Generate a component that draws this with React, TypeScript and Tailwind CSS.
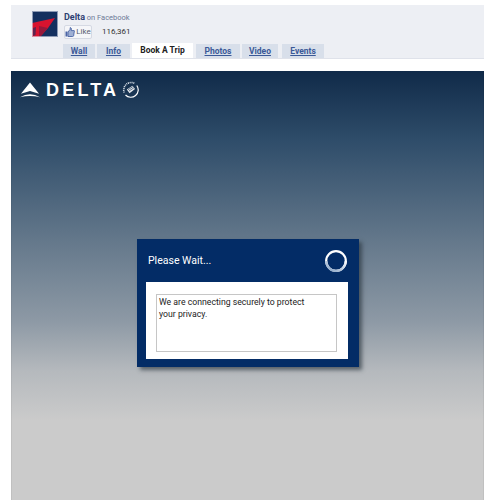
const tabs = [
  { label: "Wall", cls: "w-[32px] mr-[2px]" },
  { label: "Info", cls: "w-[33px] mr-[2px]" },
  { label: "Book A Trip", cls: "w-[61px] mr-[3px]", active: true },
  { label: "Photos", cls: "w-[44px] mr-[2px]" },
  { label: "Video", cls: "w-[36px] mr-[4px]" },
  { label: "Events", cls: "w-[42px]" },
];

function DeltaWidget() {
  return (
    <svg width="26" height="26" viewBox="0 0 26 26" className="shrink-0">
      <rect width="26" height="26" fill="#14305f" />
      <polygon points="0,12 23,7 16,17 8,26 0,26" fill="#d8132f" />
      <polygon points="7,15 16,17 8,26 7,26" fill="#96183a" />
      <polygon points="1,17 4,16 3.5,24 1,25" fill="#5d2550" />
      <rect x="0.5" y="0.5" width="25" height="25" fill="none" stroke="#dfe3ee" strokeWidth="1" opacity="0.6" />
    </svg>
  );
}

function Seal() {
  return (
    <svg width="17" height="17" viewBox="0 0 17 17" className="shrink-0">
      <path d="M14.8 4.5 A7.4 7.4 0 0 1 3.5 14" fill="none" stroke="#fff" strokeWidth="1.2" />
      <path d="M2.2 11.5 A7.4 7.4 0 0 1 13 2.6" fill="none" stroke="#dfe6ee" strokeWidth="1.6" strokeDasharray="1 0.8" />
      <path d="M4.8 8.5 L10.5 4.8 L13 8 L7.5 12.2 Z" fill="#fff" opacity="0.9" />
      <path d="M6 8.7 L10.8 5.7 M7 10 L11.8 6.9" stroke="#233d5c" strokeWidth="0.7" />
    </svg>
  );
}

function Spinner() {
  return (
    <svg width="24" height="24" viewBox="0 0 24 24">
      <defs>
        <linearGradient id="spin" x1="1" y1="0" x2="0" y2="1">
          <stop offset="0" stopColor="#ffffff" />
          <stop offset="1" stopColor="#7f9dc2" />
        </linearGradient>
      </defs>
      <circle cx="12" cy="12" r="9.8" fill="none" stroke="#fff" strokeWidth="2.2" />
      <path d="M21.8 12 A9.8 9.8 0 0 1 2.2 12" fill="none" stroke="url(#spin)" strokeWidth="2.2" />
    </svg>
  );
}

function LikeThumb() {
  return (
    <svg width="10" height="10" viewBox="0 0 10 10" className="shrink-0">
      <rect x="0.5" y="4.5" width="2" height="5" fill="#4a64a5" />
      <path d="M3 5 L5 2.5 L5.3 0.5 Q7 0.8 6.2 3.6 L9.2 3.6 Q9.8 4 9.2 5 L8.6 8.8 Q8.4 9.5 7.6 9.5 L3 9.5 Z" fill="#9fb0d4" stroke="#4a64a5" strokeWidth="0.9" />
    </svg>
  );
}

export default function App() {
  return (
    <div className="w-[487px] h-[500px] overflow-hidden bg-white pt-[5px] pl-[11px] pr-[3px] font-['Roboto',sans-serif]">
      {/* Facebook page header */}
      <div className="h-[54px] bg-[#edeff4] border-b border-[#dfe2ea] pl-[21px] pt-[6px]">
        <div className="flex gap-[6px] h-[32px]">
          <DeltaWidget />
          <div>
            <div className="mt-[1px] text-[7.5px] leading-[10px] text-[#6d7a98] whitespace-nowrap">
              <span className="text-[9px] font-bold text-[#2d3f72]">Delta</span> on Facebook
            </div>
            <div className="flex items-center mt-[2px]">
              <div className="w-[28px] h-[14px] bg-[#f5f6f9] border border-[#d5d9e3] rounded-[2px] flex items-center justify-center gap-[1px] text-[8px] text-[#555d70]">
                <LikeThumb />
                Like
              </div>
              <span className="ml-[10px] text-[8px] text-[#333]">116,361</span>
            </div>
          </div>
        </div>
        <div className="flex items-end h-[15px] ml-[31px]">
          {tabs.map((t) =>
            t.active ? (
              <div key={t.label} className={`${t.cls} h-[15px] bg-white text-center text-[8.5px] leading-[15px] font-bold text-[#222] whitespace-nowrap`}>
                {t.label}
              </div>
            ) : (
              <div key={t.label} className={`${t.cls} h-[14px] bg-[#d8dfea] text-center text-[8.5px] leading-[15px] font-bold text-[#3b5998] underline whitespace-nowrap`}>
                {t.label}
              </div>
            )
          )}
        </div>
      </div>

      {/* Delta booking frame */}
      <div className="mt-[12px] w-[473px] h-[429px] border-x border-black/5 bg-[linear-gradient(to_bottom,#102a49_0px,#2f4d6a_70px,#64788b_170px,#8d99a5_250px,#b5b9bd_300px,#cbcbcb_350px)]">
        <div className="flex items-center pl-[8px] pt-[9px] h-[28px]">
          <svg width="20" height="16" viewBox="0 0 21 16" className="shrink-0">
            <polygon points="10.5,0 20,12 10.5,9 1,12" fill="#fff" />
            <path d="M0 15.5 Q10.5 9.5 21 15.5 Q10.5 13 0 15.5 Z" fill="#fff" />
          </svg>
          <span className="ml-[6px] font-['Liberation_Sans',sans-serif] font-bold text-[18px] leading-none tracking-[3.2px] text-white">DELTA</span>
          <div className="ml-[3px]"><Seal /></div>
        </div>

        <div className="ml-[125px] mt-[140px] w-[222px] h-[128px] bg-[#032c66] shadow-[3px_3px_4px_rgba(40,50,60,0.65)] px-[9px]">
          <div className="h-[43px] flex items-center justify-between">
            <span className="ml-[2px] text-[10.5px] text-white">Please Wait...</span>
            <div className="mr-[2px]"><Spinner /></div>
          </div>
          <div className="w-[202px] h-[77px] bg-white pl-[10px] pt-[12px]">
            <div className="w-[181px] h-[58px] border border-[#c6c6c6] pl-[2px] pt-[1px] text-[8.7px] leading-[12px] text-[#222]">
              We are connecting securely to protect
              <br />
              your privacy.
            </div>
          </div>
        </div>
      </div>
    </div>
  );
}
